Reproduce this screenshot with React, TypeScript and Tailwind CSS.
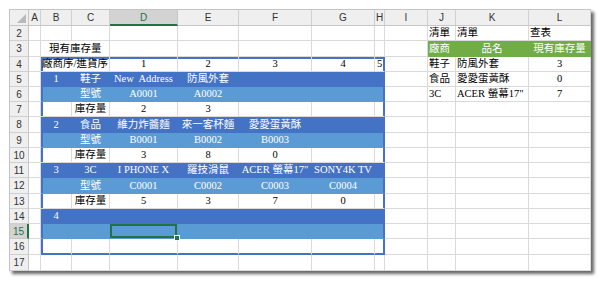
import React from 'react';

type Cell = { t: string; a?: 'l' | 'c' };
type Row = { n: number; h: string; c: Record<string, Cell> };

const cols = [
  { k: 'A', w: 'w-[12px]' },
  { k: 'B', w: 'w-[31px]' },
  { k: 'C', w: 'w-[38px]' },
  { k: 'D', w: 'w-[68px]' },
  { k: 'E', w: 'w-[61px]' },
  { k: 'F', w: 'w-[73px]' },
  { k: 'G', w: 'w-[63px]' },
  { k: 'H', w: 'w-[10px]' },
  { k: 'I', w: 'w-[43px]' },
  { k: 'J', w: 'w-[28px]' },
  { k: 'K', w: 'w-[73px]' },
  { k: 'L', w: 'w-[62px]' },
];

const c = (t: string, a: 'l' | 'c' = 'c'): Cell => ({ t, a });

const rows: Row[] = [
  { n: 2, h: 'h-[15px]', c: { J: c('清單', 'l'), K: c('清單', 'l'), L: c('查表', 'l') } },
  { n: 3, h: 'h-[16px]', c: { BC: c('現有庫存量', 'l'), J: c('廠商', 'l'), K: c('品名'), L: c('現有庫存量') } },
  { n: 4, h: 'h-[15px]', c: { BC: c('廠商序/進貨序'), D: c('1'), E: c('2'), F: c('3'), G: c('4'), H: c('5'), J: c('鞋子', 'l'), K: c('防風外套', 'l'), L: c('3') } },
  { n: 5, h: 'h-[15px]', c: { B: c('1'), C: c('鞋子'), D: c('New  Address'), E: c('防風外套'), J: c('食品', 'l'), K: c('愛愛蛋黃酥', 'l'), L: c('0') } },
  { n: 6, h: 'h-[15px]', c: { C: c('型號'), D: c('A0001'), E: c('A0002'), J: c('3C', 'l'), K: c('ACER 螢幕17"', 'l'), L: c('7') } },
  { n: 7, h: 'h-[15px]', c: { C: c('庫存量'), D: c('2'), E: c('3') } },
  { n: 8, h: 'h-[16px]', c: { B: c('2'), C: c('食品'), D: c('維力炸醬麵'), E: c('來一客杯麵'), F: c('愛愛蛋黃酥') } },
  { n: 9, h: 'h-[15px]', c: { C: c('型號'), D: c('B0001'), E: c('B0002'), F: c('B0003') } },
  { n: 10, h: 'h-[15px]', c: { C: c('庫存量'), D: c('3'), E: c('8'), F: c('0') } },
  { n: 11, h: 'h-[15px]', c: { B: c('3'), C: c('3C'), D: c('I PHONE X'), E: c('羅技滑鼠'), F: c('ACER 螢幕17"'), G: c('SONY4K TV') } },
  { n: 12, h: 'h-[16px]', c: { C: c('型號'), D: c('C0001'), E: c('C0002'), F: c('C0003'), G: c('C0004') } },
  { n: 13, h: 'h-[15px]', c: { C: c('庫存量'), D: c('5'), E: c('3'), F: c('7'), G: c('0') } },
  { n: 14, h: 'h-[15px]', c: { B: c('4') } },
  { n: 15, h: 'h-[15px]', c: {} },
  { n: 16, h: 'h-[16px]', c: {} },
  { n: 17, h: 'h-[16px]', c: {} },
];

// table style B4:H16 — banded rows
const band: Record<number, string> = {
  5: 'dark', 8: 'dark', 11: 'dark', 14: 'dark',
  6: 'light', 9: 'light', 12: 'light', 15: 'light',
};

const fills: Record<string, string> = {
  dark: 'bg-[#4472C4] border-[#4472C4] text-white',
  light: 'bg-[#5B9BD5] border-[#5B9BD5] text-white',
  green: 'bg-[#70AD47] border-[#70AD47] text-white',
  white: 'bg-white border-[#dadada] text-black',
};

const edges: Record<string, string> = {
  t: 'shadow-[inset_0_2px_0_0_#4472C4]',
  tl: 'shadow-[inset_2px_2px_0_0_#4472C4]',
  tr: 'shadow-[inset_-1px_2px_0_0_#4472C4] border-r-[#4472C4]',
  b: 'shadow-[inset_0_-1px_0_0_#4472C4] border-b-[#4472C4]',
  bl: 'shadow-[inset_2px_-1px_0_0_#4472C4] border-b-[#4472C4]',
  br: 'shadow-[inset_-1px_-1px_0_0_#4472C4] border-r-[#4472C4] border-b-[#4472C4]',
  l: 'shadow-[inset_2px_0_0_0_#4472C4]',
  r: 'shadow-[inset_-1px_0_0_0_#4472C4] border-r-[#4472C4]',
};

const tableCols = ['B', 'C', 'D', 'E', 'F', 'G', 'H'];

function cellClass(n: number, k: string) {
  const inTable = n >= 4 && n <= 16 && tableCols.includes(k);
  let fill = 'white';
  if (inTable && band[n]) fill = band[n];
  if (n === 3 && ['J', 'K', 'L'].includes(k)) fill = 'green';
  let edge = '';
  if (inTable) {
    const key =
      (n === 4 ? 't' : '') + (n === 16 ? 'b' : '') + (k === 'B' ? 'l' : '') + (k === 'H' ? 'r' : '');
    edge = edges[key] ?? '';
  }
  return `${fills[fill]} ${edge}`;
}

function Cells({ row }: { row: Row }) {
  const out: React.ReactNode[] = [];
  for (let i = 0; i < cols.length; i++) {
    const col = cols[i];
    let w = col.w;
    let cell = row.c[col.k];
    if (col.k === 'B' && row.c.BC) {
      w = 'w-[69px]';
      cell = row.c.BC;
      i++;
    }
    const selected = row.n === 15 && col.k === 'D';
    out.push(
      <div
        key={col.k}
        className={`${w} ${cellClass(row.n, col.k)} relative h-full shrink-0 border-r border-b flex items-center whitespace-pre ${
          cell?.a === 'l' ? 'justify-start' : 'justify-center'
        } ${row.n === 3 && col.k === 'B' ? 'pl-[8px]' : cell?.a === 'l' ? 'pl-[1px]' : ''} ${
          selected ? 'shadow-[inset_0_0_0_2px_#217346]' : ''
        }`}
      >
        {cell && <span className="leading-none pt-[1px]">{cell.t}</span>}
        {selected && (
          <span className="absolute -right-[3px] -bottom-[3px] z-10 w-[6px] h-[6px] bg-[#217346] border border-white" />
        )}
      </div>
    );
  }
  return <>{out}</>;
}

export default function App() {
  return (
    <div className="w-[600px] h-[281px] bg-white pt-[9px] pl-[9px] overflow-hidden">
      <div className="w-[582px] overflow-hidden bg-white border-t border-l border-[#c4c4c4] shadow-[3px_3px_3px_rgba(0,0,0,0.6)] font-['Liberation_Serif','Noto_Sans_CJK_TC',serif] text-[10.5px]">
        {/* column headers */}
        <div className="flex h-[16px] bg-[#efefef] font-['Liberation_Sans','Noto_Sans',sans-serif] text-[10px] text-[#333]">
          <div className="w-[19px] h-full shrink-0 border-r border-b border-[#c6c6c6] flex items-end justify-end p-[2px]">
            <svg width="9" height="9" viewBox="0 0 9 9">
              <polygon points="9,0 9,9 0,9" fill="#b9b9b9" />
            </svg>
          </div>
          {cols.map((col) =>
            col.k === 'D' ? (
              <div
                key={col.k}
                className={`${col.w} h-full shrink-0 bg-[#d3d3d3] border-r border-[#c6c6c6] border-b-2 border-b-[#217346] flex items-center justify-center text-[#217346]`}
              >
                {col.k}
              </div>
            ) : (
              <div
                key={col.k}
                className={`${col.w} h-full shrink-0 border-r border-b border-[#d0d0d0] border-b-[#c6c6c6] flex items-center justify-center`}
              >
                {col.k}
              </div>
            )
          )}
        </div>
        {rows.map((row) => (
          <div key={row.n} className={`flex ${row.h}`}>
            {row.n === 15 ? (
              <div className="w-[19px] h-full shrink-0 bg-[#d3d3d3] border-b border-[#c6c6c6] border-r-2 border-r-[#217346] flex items-center justify-center font-['Liberation_Sans','Noto_Sans',sans-serif] text-[10px] text-[#217346]">
                {row.n}
              </div>
            ) : (
              <div className="w-[19px] h-full shrink-0 bg-[#efefef] border-r border-b border-[#d0d0d0] border-r-[#c6c6c6] flex items-center justify-center font-['Liberation_Sans','Noto_Sans',sans-serif] text-[10px] text-[#333]">
                {row.n}
              </div>
            )}
            <Cells row={row} />
          </div>
        ))}
      </div>
    </div>
  );
}
